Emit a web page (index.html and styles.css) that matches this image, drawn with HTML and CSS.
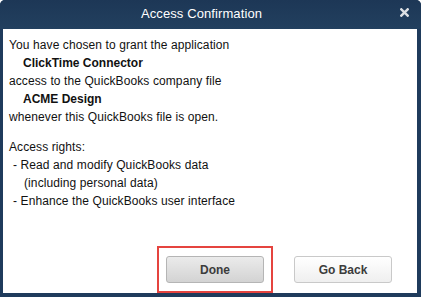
FILE: index.html
```html
<!DOCTYPE html>
<html>
<head>
<meta charset="utf-8">
<link rel="stylesheet" href="styles.css">
</head>
<body>
<div class="window">
  <div class="titlebar">
    <span class="title">Access Confirmation</span>
    <svg class="close" width="9" height="9" viewBox="0 0 9 9"><path d="M1.3 1.3 L7.7 7.7 M7.7 1.3 L1.3 7.7" stroke="#dcdfe3" stroke-width="2.4" stroke-linecap="square"/></svg>
  </div>
  <div class="content">
    <div class="text">
      <p>You have chosen to grant the application</p>
      <p class="bold">ClickTime Connector</p>
      <p>access to the QuickBooks company file</p>
      <p class="bold">ACME Design</p>
      <p>whenever this QuickBooks file is open.</p>
      <p class="gap">Access rights:</p>
      <p class="item">- Read and modify QuickBooks data</p>
      <p class="item2">(including personal data)</p>
      <p class="item">- Enhance the QuickBooks user interface</p>
    </div>
    <div class="buttons">
      <div class="highlight"><button class="btn btn-done">Done</button></div>
      <button class="btn btn-back">Go Back</button>
    </div>
  </div>
</div>
</body>
</html>
```
FILE: styles.css
```css
* { box-sizing: border-box; }
html, body { margin: 0; padding: 0; }
body { width: 421px; height: 297px; overflow: hidden; background: #fff; font-family: "Liberation Sans", Arial, sans-serif; }
.window {
  width: 421px; height: 297px;
  background: #1f3b5c;
  border-radius: 5px 5px 0 0;
  display: flex; flex-direction: column;
  padding: 0 4px 4px 3px;
}
.titlebar {
  height: 29px; flex: none;
  display: flex; align-items: center; justify-content: center;
  position: relative;
  background: linear-gradient(#1d3756, #22405f);
  margin: 0 -4px 0 -3px;
  padding-right: 18px;
  border-radius: 5px 5px 0 0;
}
.title { color: #fff; font-size: 13px; margin-top: -2px; letter-spacing: 0.1px; }
.close { position: absolute; right: 12px; top: 8px; }
.content {
  flex: 1; background: #fff;
  display: flex; flex-direction: column;
  padding: 7px 6px 0 6px;
}
.text p { margin: 0; font-size: 12px; line-height: 18px; color: #111; letter-spacing: 0.1px; }
.text .bold { font-weight: bold; padding-left: 14px; letter-spacing: 0; }
.text .gap { margin-top: 12px; }
.text .item { padding-left: 4px; }
.text .item2 { padding-left: 15px; }
.buttons {
  margin-top: auto;
  display: flex; align-items: center;
  padding-left: 148px;
  height: 47px;
}
.highlight {
  border: 2px solid #e5443f;
  padding: 8px 7px 8px 7px;
  display: flex;
}
.btn {
  width: 98px; height: 27px;
  font-family: "Liberation Sans", Arial, sans-serif;
  font-size: 12px; font-weight: bold; color: #3c3c3c;
  border-radius: 3px; padding: 0;
}
.btn-done {
  background: linear-gradient(#ebebeb, #d3d3d3);
  border: 1px solid #b5b5b5;
}
.btn-back {
  margin-left: 21px;
  background: linear-gradient(#ffffff, #efefef);
  border: 1px solid #c9c9c9;
}
```
